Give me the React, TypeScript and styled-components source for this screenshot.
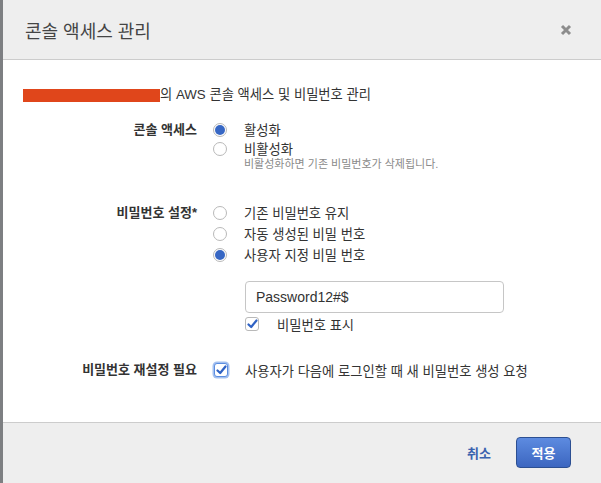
import React, { useState } from "react";
import styled, { createGlobalStyle } from "styled-components";

const GlobalStyle = createGlobalStyle`
  html, body {
    margin: 0;
    padding: 0;
    background: #ffffff;
  }
  body {
    font-family: "Liberation Sans", "Noto Sans CJK KR", sans-serif;
    color: #333333;
    -webkit-font-smoothing: antialiased;
  }
`;

const Page = styled.div`
  display: flex;
  width: 601px;
  height: 483px;
  overflow: hidden;
`;

const Backdrop = styled.div`
  width: 3px;
  flex: 0 0 3px;
  background: #7d7f82;
`;

const Modal = styled.div`
  flex: 1 1 auto;
  display: flex;
  flex-direction: column;
  background: #ffffff;
`;

const Header = styled.div`
  display: flex;
  align-items: center;
  justify-content: space-between;
  height: 59px;
  padding: 0 29px 0 22px;
  background: #eeeeee;
  border-bottom: 1px solid #cccccc;
  flex: 0 0 auto;
`;

const Title = styled.h2`
  margin: 0;
  font-size: 18px;
  font-weight: 400;
  color: #444444;
`;

const CloseButton = styled.button`
  display: flex;
  padding: 0;
  border: 0;
  background: none;
  cursor: pointer;
`;

const Body = styled.div`
  flex: 1 1 auto;
  padding-top: 26px;
`;

const Intro = styled.div`
  display: flex;
  align-items: center;
  padding-left: 20px;
  font-size: 13.3px;
  line-height: 18px;
  color: #333333;
`;

const Redacted = styled.span`
  display: inline-block;
  width: 137px;
  height: 13px;
  background: #e0461b;
`;

const Form = styled.div`
  display: grid;
  grid-template-columns: 194px 1fr;
  column-gap: 15px;
`;

const Label = styled.div<{ $mt: number; $lh: number }>`
  margin-top: ${(p) => p.$mt}px;
  text-align: right;
  font-size: 13px;
  font-weight: 700;
  line-height: ${(p) => p.$lh}px;
  color: #333333;
`;

const Controls = styled.div<{ $mt: number }>`
  margin-top: ${(p) => p.$mt}px;
  display: flex;
  flex-direction: column;
`;

const OptionRow = styled.label<{ $h: number; $indent?: number; $gap?: number }>`
  display: flex;
  align-items: center;
  height: ${(p) => p.$h}px;
  padding-left: ${(p) => p.$indent ?? 1}px;
  gap: ${(p) => p.$gap ?? 17}px;
  font-size: 13.3px;
  color: #333333;
  cursor: pointer;
`;

const RadioDot = styled.span<{ $checked: boolean }>`
  position: relative;
  width: 14px;
  height: 14px;
  box-sizing: border-box;
  border-radius: 50%;
  border: 1px solid #b9b9b9;
  background: #ffffff;
  flex: 0 0 auto;

  &::after {
    content: "";
    position: absolute;
    inset: 1px;
    border-radius: 50%;
    background: ${(p) => (p.$checked ? "#3767c4" : "transparent")};
  }
`;

const Hint = styled.div`
  padding-left: 32px;
  font-size: 11px;
  line-height: 13px;
  color: #8a8a8a;
`;

const TextInput = styled.input`
  margin: 16px 0 0 33px;
  width: 259px;
  height: 32px;
  box-sizing: border-box;
  padding: 0 10px;
  border: 1px solid #c6c6c6;
  border-radius: 4px;
  font-family: "Liberation Sans", "Noto Sans CJK KR", sans-serif;
  font-size: 14px;
  color: #333333;
  outline: none;
`;

const Box = styled.span<{ $focused?: boolean }>`
  display: flex;
  align-items: center;
  justify-content: center;
  width: 14px;
  height: 14px;
  box-sizing: border-box;
  border-radius: 3px;
  border: 1px solid ${(p) => (p.$focused ? "#5b8de0" : "#b9b9b9")};
  box-shadow: ${(p) => (p.$focused ? "0 0 0 1.5px #a4c1f0" : "none")};
  background: #ffffff;
  flex: 0 0 auto;
`;

const Footer = styled.div`
  display: flex;
  align-items: flex-start;
  justify-content: flex-end;
  gap: 25px;
  height: 61px;
  box-sizing: border-box;
  padding: 14px 30px 0 0;
  background: #eeeeee;
  border-top: 1px solid #cccccc;
  flex: 0 0 auto;
`;

const LinkButton = styled.button`
  height: 31px;
  padding: 0;
  border: 0;
  background: none;
  font-family: "Liberation Sans", "Noto Sans CJK KR", sans-serif;
  font-size: 13px;
  font-weight: 700;
  color: #3a62ae;
  cursor: pointer;
`;

const PrimaryButton = styled.button`
  width: 55px;
  height: 31px;
  box-sizing: border-box;
  border: 1px solid #2c4f92;
  border-radius: 4px;
  background: linear-gradient(#5d8be0, #3c66c0);
  font-family: "Liberation Sans", "Noto Sans CJK KR", sans-serif;
  font-size: 13px;
  font-weight: 700;
  color: #ffffff;
  cursor: pointer;
`;

const CloseIcon = () => (
  <svg width="12" height="12" viewBox="0 0 12 12">
    <path d="M2 2 L10 10 M10 2 L2 10" stroke="#8c8c8c" strokeWidth="3" strokeLinecap="butt" />
  </svg>
);

const Check = () => (
  <svg width="11" height="10" viewBox="0 0 11 10">
    <path d="M1.5 5.5 L4.2 8 L9.5 1.5" fill="none" stroke="#2f62c4" strokeWidth="2.2" strokeLinecap="round" strokeLinejoin="round" />
  </svg>
);

const App: React.FC = () => {
  const [access, setAccess] = useState("on");
  const [pw, setPw] = useState("custom");

  return (
    <>
      <GlobalStyle />
      <Page>
        <Backdrop />
        <Modal>
          <Header>
            <Title>콘솔 액세스 관리</Title>
            <CloseButton aria-label="닫기">
              <CloseIcon />
            </CloseButton>
          </Header>
          <Body>
            <Intro>
              <Redacted />
              의 AWS 콘솔 액세스 및 비밀번호 관리
            </Intro>
            <Form>
              <Label $mt={16} $lh={19}>콘솔 액세스</Label>
              <Controls $mt={16}>
                <OptionRow $h={19} onClick={() => setAccess("on")}>
                  <RadioDot $checked={access === "on"} />
                  활성화
                </OptionRow>
                <OptionRow $h={19} onClick={() => setAccess("off")}>
                  <RadioDot $checked={access === "off"} />
                  비활성화
                </OptionRow>
                <Hint>비활성화하면 기존 비밀번호가 삭제됩니다.</Hint>
              </Controls>

              <Label $mt={31} $lh={21}>비밀번호 설정*</Label>
              <Controls $mt={31}>
                <OptionRow $h={21} onClick={() => setPw("keep")}>
                  <RadioDot $checked={pw === "keep"} />
                  기존 비밀번호 유지
                </OptionRow>
                <OptionRow $h={21} onClick={() => setPw("auto")}>
                  <RadioDot $checked={pw === "auto"} />
                  자동 생성된 비밀 번호
                </OptionRow>
                <OptionRow $h={21} onClick={() => setPw("custom")}>
                  <RadioDot $checked={pw === "custom"} />
                  사용자 지정 비밀 번호
                </OptionRow>
                <TextInput defaultValue="Password12#$" />
                <OptionRow $h={20} $indent={33} $gap={18} style={{ marginTop: 1 }}>
                  <Box>
                    <Check />
                  </Box>
                  비밀번호 표시
                </OptionRow>
              </Controls>

              <Label $mt={26} $lh={20}>비밀번호 재설정 필요</Label>
              <Controls $mt={26}>
                <OptionRow $h={20} $indent={2} $gap={17}>
                  <Box $focused>
                    <Check />
                  </Box>
                  사용자가 다음에 로그인할 때 새 비밀번호 생성 요청
                </OptionRow>
              </Controls>
            </Form>
          </Body>
          <Footer>
            <LinkButton>취소</LinkButton>
            <PrimaryButton>적용</PrimaryButton>
          </Footer>
        </Modal>
      </Page>
    </>
  );
};

export default App;
